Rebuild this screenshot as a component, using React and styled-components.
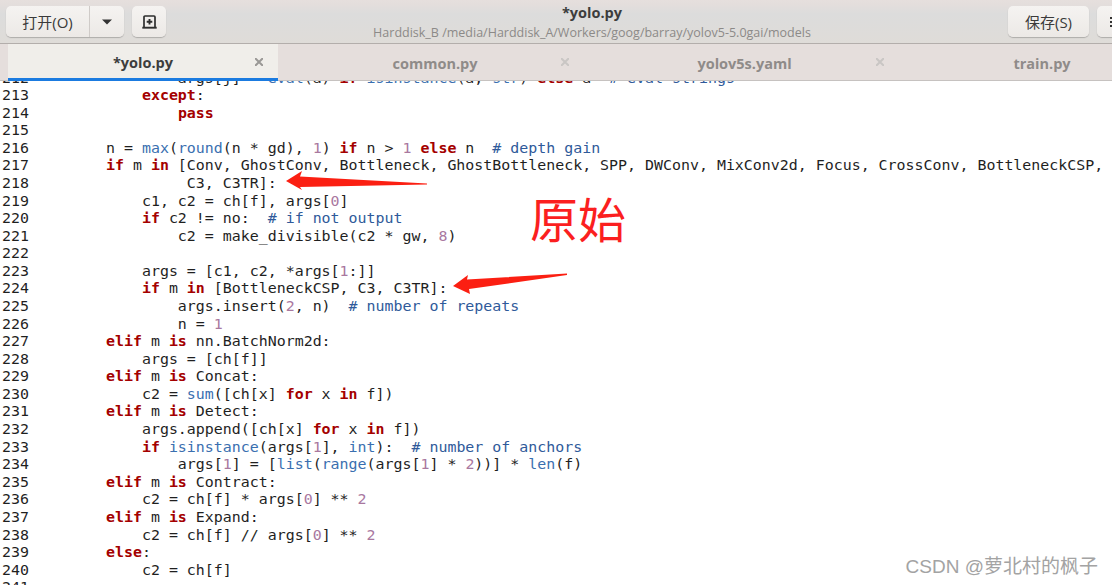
import React from "react";
import styled, { createGlobalStyle } from "styled-components";

const UI_FONT = `"Open Sans", "Noto Sans", "Noto Sans CJK SC", sans-serif`;

const GlobalStyle = createGlobalStyle`
  html, body {
    margin: 0;
    height: 100%;
    background: #fff;
    overflow: hidden;
  }
`;

const Window = styled.div`
  position: relative;
  width: 1112px;
  height: 585px;
  overflow: hidden;
  display: flex;
  flex-direction: column;
  font-family: ${UI_FONT};
`;

const HeaderBar = styled.header`
  height: 44px;
  flex: none;
  box-sizing: border-box;
  padding: 6px 0 0 6px;
  display: flex;
  gap: 8px;
  background: linear-gradient(#e6dfdd 0, #e4dedc 4px, #dcdcdc 14px, #dfdcd8 44px);
  border-bottom: 1px solid #b3aeab;
`;

const ButtonGroup = styled.div`
  display: flex;
  height: 31px;
  flex: none;
  border-radius: 5px;
  background: linear-gradient(#f5f3f1, #ece9e6);
  box-shadow: 0 1px 1px rgba(0, 0, 0, 0.22);
`;

const HeaderButton = styled.div`
  width: ${({ $w }) => $w}px;
  display: flex;
  align-items: center;
  justify-content: center;
  font-size: 15px;
  color: #3a3a3a;
  box-sizing: border-box;
  & + & {
    border-left: 1px solid #cfcbc8;
  }
`;

const TitleBlock = styled.div`
  flex: 1;
  display: flex;
  flex-direction: column;
  align-items: center;
  margin: -3px 0 0 10px;
`;

const Title = styled.div`
  font-size: 14.5px;
  font-weight: 700;
  line-height: 20px;
  color: #3d3d3d;
`;

const Subtitle = styled.div`
  font-size: 12.5px;
  line-height: 16px;
  margin-top: 2px;
  color: #8c8a88;
`;

const RightButtons = styled.div`
  display: flex;
  gap: 8px;
  margin-right: -24px;
`;

const TabBar = styled.nav`
  height: 37px;
  flex: none;
  display: flex;
  padding-left: 8px;
  box-sizing: border-box;
  background: #e5dedc;
  border-bottom: 1px solid #c6c2c0;
  position: relative;
  z-index: 1;
`;

const Tab = styled.div`
  position: relative;
  flex: none;
  width: ${({ $w }) => $w}px;
  box-sizing: border-box;
  padding: 2px 0 0 ${({ $shift }) => $shift || 0}px;
  height: ${({ $active }) => ($active ? 37 : 36)}px;
  display: flex;
  align-items: center;
  justify-content: center;
  font-size: 14.5px;
  font-weight: 700;
  color: ${({ $active }) => ($active ? "#3d3d3d" : "#8f8b89")};
  background: ${({ $active }) => ($active ? "#f0eeea" : "transparent")};
  border-bottom: ${({ $active }) => ($active ? "3px solid #1b7be0" : "none")};
`;

const CloseMark = styled.svg`
  position: absolute;
  right: 15px;
  top: 14px;
  width: 8px;
  height: 8px;
  stroke: ${({ $active }) => ($active ? "#9a9896" : "#c9c6c4")};
  stroke-width: 2;
`;

const Editor = styled.main`
  flex: 1;
  min-height: 0;
  overflow: hidden;
  background: #fff;
`;

const CodeList = styled.div`
  margin-top: -11.5px;
  font-family: "DejaVu Sans Mono", monospace;
  font-size: 14.93px;
  line-height: 17.58px;
  color: #1f1f1f;
`;

const CodeLine = styled.div`
  display: flex;
  height: 17.58px;
  white-space: pre;
`;

const LineNumber = styled.span`
  width: 27px;
  margin: 0 77px 0 2px;
  flex: none;
`;

const Keyword = styled.span`
  color: #a40000;
  font-weight: 700;
`;

const Builtin = styled.span`
  color: #3a6fb0;
`;

const NumberLit = styled.span`
  color: #a9789f;
`;

const Comment = styled.span`
  color: #2f5a9a;
`;

const Annotation = styled.svg`
  position: absolute;
  left: 0;
  top: 0;
  width: 1112px;
  height: 585px;
  pointer-events: none;
  z-index: 2;
`;

const BigLabel = styled.div`
  position: absolute;
  left: 530px;
  top: 183px;
  font-family: "Noto Sans CJK SC", sans-serif;
  font-size: 48px;
  line-height: 68px;
  color: #fb1f1f;
  z-index: 2;
`;

const Watermark = styled.div`
  position: absolute;
  right: 14px;
  top: 554px;
  font-family: "Liberation Sans", "Noto Sans CJK SC", sans-serif;
  font-size: 19px;
  line-height: 26px;
  color: #a3a3a3;
  z-index: 2;
`;

const SOURCE = [
  [212, "        args[j] = eval(a) if isinstance(a, str) else a  # eval strings"],
  [213, "    except:"],
  [214, "        pass"],
  [215, ""],
  [216, "n = max(round(n * gd), 1) if n > 1 else n  # depth gain"],
  [217, "if m in [Conv, GhostConv, Bottleneck, GhostBottleneck, SPP, DWConv, MixConv2d, Focus, CrossConv, BottleneckCSP,"],
  [218, "         C3, C3TR]:"],
  [219, "    c1, c2 = ch[f], args[0]"],
  [220, "    if c2 != no:  # if not output"],
  [221, "        c2 = make_divisible(c2 * gw, 8)"],
  [222, ""],
  [223, "    args = [c1, c2, *args[1:]]"],
  [224, "    if m in [BottleneckCSP, C3, C3TR]:"],
  [225, "        args.insert(2, n)  # number of repeats"],
  [226, "        n = 1"],
  [227, "elif m is nn.BatchNorm2d:"],
  [228, "    args = [ch[f]]"],
  [229, "elif m is Concat:"],
  [230, "    c2 = sum([ch[x] for x in f])"],
  [231, "elif m is Detect:"],
  [232, "    args.append([ch[x] for x in f])"],
  [233, "    if isinstance(args[1], int):  # number of anchors"],
  [234, "        args[1] = [list(range(args[1] * 2))] * len(f)"],
  [235, "elif m is Contract:"],
  [236, "    c2 = ch[f] * args[0] ** 2"],
  [237, "elif m is Expand:"],
  [238, "    c2 = ch[f] // args[0] ** 2"],
  [239, "else:"],
  [240, "    c2 = ch[f]"],
  [241, ""],
];

const TOKENS =
  /(#.*$)|\b(if|else|elif|except|pass|in|is|for)\b|\b(max|round|eval|isinstance|str|int|sum|list|range|len)\b|\b(\d+)\b/g;

// splits one line of python into coloured spans
const highlight = (text) => {
  const parts = [];
  let last = 0;
  for (const m of text.matchAll(TOKENS)) {
    if (m.index > last) parts.push(text.slice(last, m.index));
    const key = m.index;
    if (m[1]) parts.push(<Comment key={key}>{m[0]}</Comment>);
    else if (m[2]) parts.push(<Keyword key={key}>{m[0]}</Keyword>);
    else if (m[3]) parts.push(<Builtin key={key}>{m[0]}</Builtin>);
    else parts.push(<NumberLit key={key}>{m[0]}</NumberLit>);
    last = m.index + m[0].length;
  }
  parts.push(text.slice(last));
  return parts;
};

const Close = ({ active }) => (
  <CloseMark $active={active} viewBox="0 0 8 8">
    <path d="M0 0L8 8M8 0L0 8" />
  </CloseMark>
);

const App = () => (
  <Window>
    <GlobalStyle />
    <HeaderBar>
      <ButtonGroup>
        <HeaderButton $w={83}>打开(O)</HeaderButton>
        <HeaderButton $w={35}>
          <svg width="12" height="6" viewBox="0 0 12 6">
            <path d="M1 0.5H11L6 5.5Z" fill="#333" />
          </svg>
        </HeaderButton>
      </ButtonGroup>
      <ButtonGroup>
        <HeaderButton $w={34}>
          <svg width="15" height="14" viewBox="0 0 15 14" fill="none">
            <path d="M2 12.5V2Q2 1 3 1H12Q13 1 13 2V12.5" stroke="#2e2e2e" strokeWidth="1.7" />
            <path d="M0.3 12.7H14.7" stroke="#2e2e2e" strokeWidth="1.9" />
            <path d="M7.5 4V9.6M4.7 6.8H10.3" stroke="#2e2e2e" strokeWidth="1.9" />
          </svg>
        </HeaderButton>
      </ButtonGroup>
      <TitleBlock>
        <Title>*yolo.py</Title>
        <Subtitle>Harddisk_B /media/Harddisk_A/Workers/goog/barray/yolov5-5.0gai/models</Subtitle>
      </TitleBlock>
      <RightButtons>
        <ButtonGroup>
          <HeaderButton $w={81}>保存(S)</HeaderButton>
        </ButtonGroup>
        <ButtonGroup>
          <HeaderButton $w={39}>
            <svg width="14" height="12" viewBox="0 0 14 12" fill="#333">
              <path d="M0 1H14V3H0ZM0 5H14V7H0ZM0 9H14V11H0Z" />
            </svg>
          </HeaderButton>
        </ButtonGroup>
      </RightButtons>
    </HeaderBar>
    <TabBar>
      <Tab $active $w={270}>
        *yolo.py
        <Close active />
      </Tab>
      <Tab $w={306} $shift={8}>
        common.py
        <Close />
      </Tab>
      <Tab $w={315} $shift={6}>
        yolov5s.yaml
        <Close />
      </Tab>
      <Tab $w={286}>train.py</Tab>
    </TabBar>
    <Editor>
      <CodeList>
        {SOURCE.map(([num, text]) => (
          <CodeLine key={num}>
            <LineNumber>{num}</LineNumber>
            <span>{highlight(text)}</span>
          </CodeLine>
        ))}
      </CodeList>
    </Editor>
    <Annotation viewBox="0 0 1112 585">
      <path d="M286 181L302 171L300 176.5L427 183.5L427 184.5L300 187L302 190Z" fill="#fb1f12" />
      <path d="M453 286L468 275L467 279.5L567 273.5L567 275L469 289L470 294Z" fill="#fb1f12" />
    </Annotation>
    <BigLabel>原始</BigLabel>
    <Watermark>CSDN @萝北村的枫子</Watermark>
  </Window>
);

export default App;
